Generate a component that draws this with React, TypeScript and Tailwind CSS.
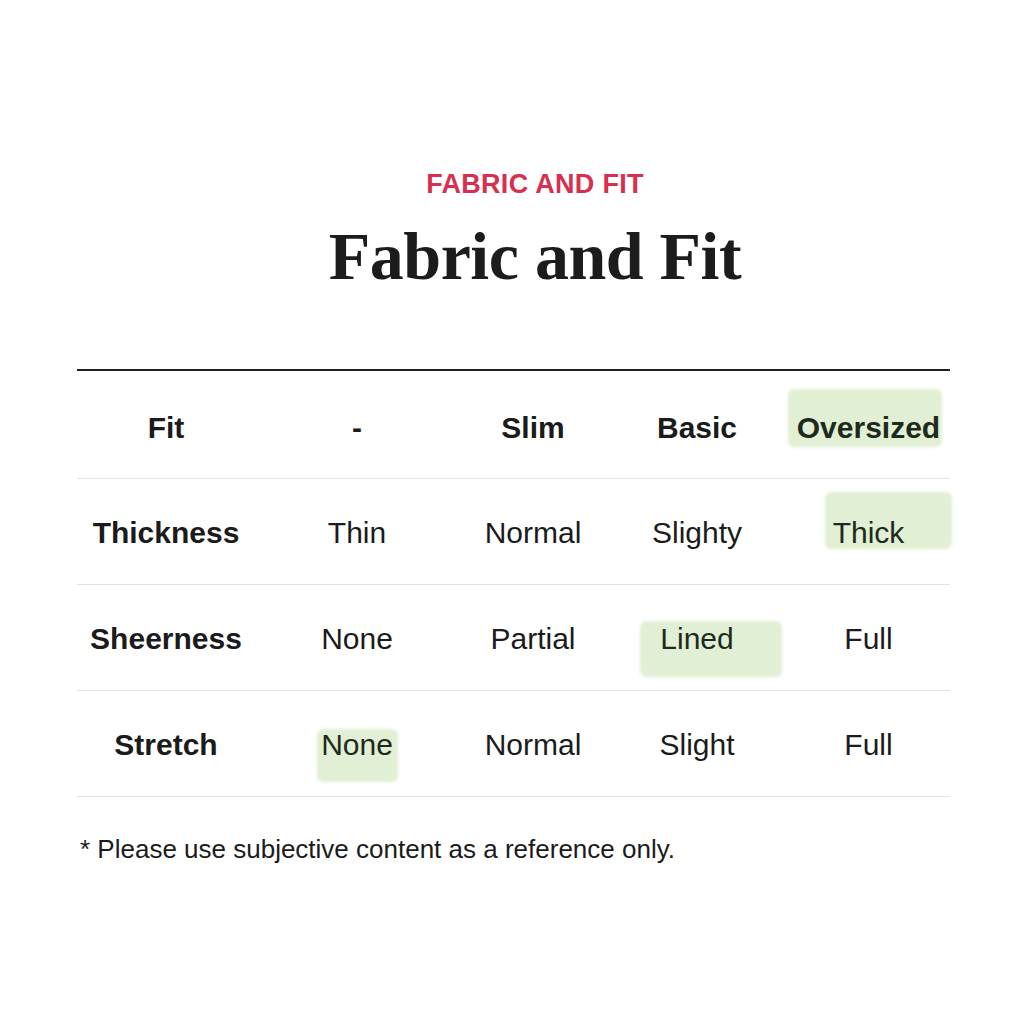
import React from "react";

type Cell = {
  text: string;
  bold?: boolean;
  mark?: string;
};

const rows: Cell[][] = [
  [
    { text: "Fit", bold: true },
    { text: "-", bold: true },
    { text: "Slim", bold: true },
    { text: "Basic", bold: true },
    { text: "Oversized", bold: true, mark: "left-[-9px] right-[-2px] top-[-24px] bottom-[-4px]" },
  ],
  [
    { text: "Thickness", bold: true },
    { text: "Thin" },
    { text: "Normal" },
    { text: "Slighty" },
    { text: "Thick", mark: "left-[-8px] right-[-48px] top-[-26px] bottom-[-1px]" },
  ],
  [
    { text: "Sheerness", bold: true },
    { text: "None" },
    { text: "Partial" },
    { text: "Lined", mark: "left-[-20px] right-[-48px] top-[-3px] bottom-[-23px]" },
    { text: "Full" },
  ],
  [
    { text: "Stretch", bold: true },
    { text: "None", mark: "left-[-4px] right-[-5px] top-[-1px] bottom-[-22px]" },
    { text: "Normal" },
    { text: "Slight" },
    { text: "Full" },
  ],
];

function TableCell({ cell }: { cell: Cell }) {
  return (
    <div className="flex items-center justify-center">
      <span
        className={
          "relative leading-none " +
          (cell.bold ? "font-bold " : "") +
          (cell.mark ? "text-[#1e2a1d]" : "text-[#1b1b1b]")
        }
      >
        {cell.mark && (
          <span
            className={"absolute rounded-[6px] bg-[#e1efd4] blur-[1.5px] " + cell.mark}
          />
        )}
        <span className="relative">{cell.text}</span>
      </span>
    </div>
  );
}

function App() {
  return (
    <div
      className="w-[1024px] h-[1024px] bg-white flex flex-col items-center"
      style={{ fontFamily: "'Liberation Sans', Arial, sans-serif" }}
    >
      <div className="mt-[171px] ml-[46px] text-[27px] font-bold leading-none text-[#d7304f] tracking-[0.3px]">
        FABRIC AND FIT
      </div>
      <h1
        className="mt-[24px] ml-[46px] text-[68px] font-bold leading-none text-[#1c1c1c] tracking-[-0.5px]"
        style={{ fontFamily: "'Liberation Serif', 'Times New Roman', serif" }}
      >
        Fabric and Fit
      </h1>

      <div className="mt-[79px] w-[873px] ml-[3px] border-t-2 border-[#1f1f1f] text-[30px]">
        {rows.map((row, i) => (
          <div
            key={i}
            className={
              "grid grid-cols-[178px_204px_148px_180px_163px] border-b border-[#e2e2e2] " +
              (i === 0 ? "h-[108px] pt-[6px]" : "h-[106px] pt-[2px]")
            }
          >
            {row.map((cell, j) => (
              <TableCell key={j} cell={cell} />
            ))}
          </div>
        ))}
      </div>

      <div className="w-[873px] ml-[3px] mt-[39px] pl-[3px] text-[26px] leading-none text-[#1b1b1b]">
        * Please use subjective content as a reference only.
      </div>
    </div>
  );
}

export default App;
